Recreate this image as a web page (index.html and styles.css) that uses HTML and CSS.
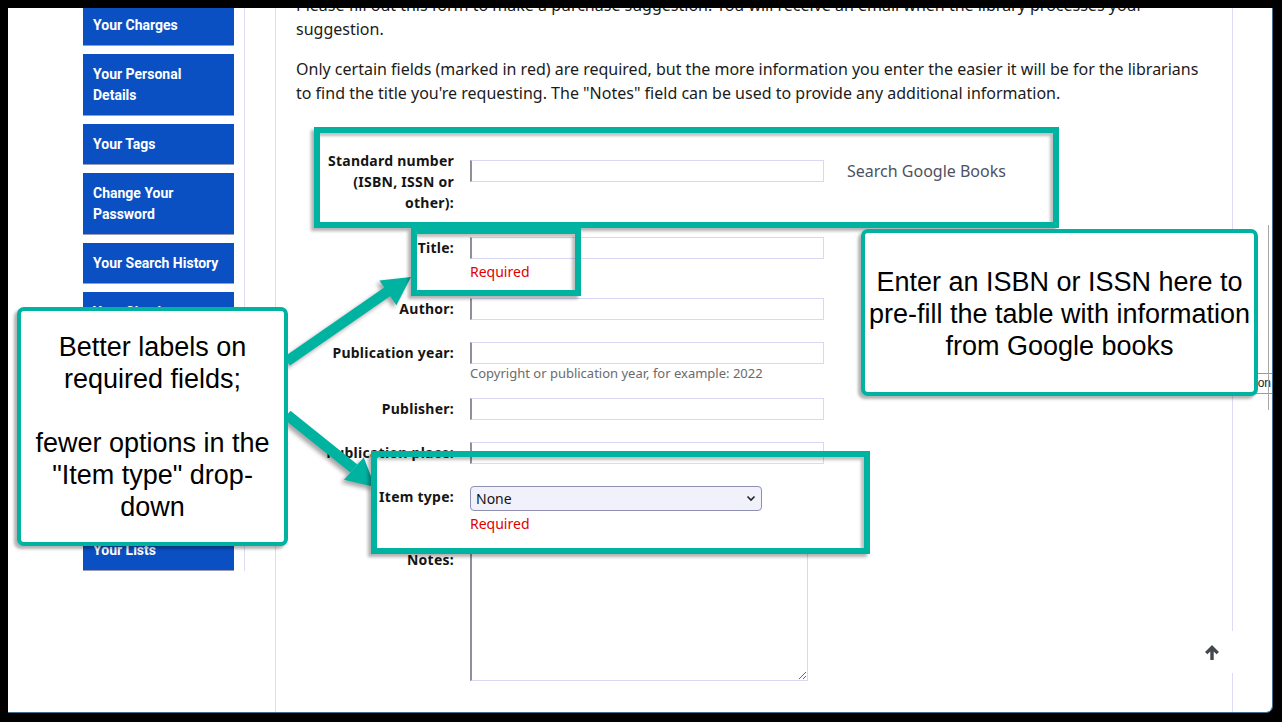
FILE: index.html
```html
<!DOCTYPE html>
<html lang="en">
<head>
<meta charset="utf-8">
<title>Purchase suggestion</title>
<link rel="stylesheet" href="styles.css">
</head>
<body>
<div class="window">
  <div class="layout">
    <nav class="sidebar">
      <ul class="usermenu">
        <li><a class="menu-link">Your Charges</a></li>
        <li><a class="menu-link">Your Personal Details</a></li>
        <li><a class="menu-link">Your Tags</a></li>
        <li><a class="menu-link">Change Your Password</a></li>
        <li><a class="menu-link">Your Search History</a></li>
        <li><a class="menu-link">Your Checkout History</a></li>
        <li><a class="menu-link">Your Purchase Suggestions</a></li>
        <li><a class="menu-link">Your Messaging</a></li>
        <li><a class="menu-link">Your Clubs</a></li>
        <li><a class="menu-link">Your Lists</a></li>
      </ul>
    </nav>
    <main class="maincontent">
      <p class="intro">Please fill out this form to make a purchase suggestion. You will receive an email when the library processes your suggestion.</p>
      <p class="intro">Only certain fields (marked in red) are required, but the more information you enter the easier it will be for the librarians to find the title you're requesting. The "Notes" field can be used to provide any additional information.</p>
      <form class="suggest">
        <ol class="rows">
          <li class="row row-std">
            <label class="lbl">Standard number (ISBN, ISSN or other):</label>
            <div class="field field-std">
              <input class="txt" type="text">
              <span class="gbooks">Search Google Books</span>
            </div>
          </li>
          <li class="row noted">
            <label class="lbl">Title:</label>
            <div class="field">
              <input class="txt" type="text">
              <div class="required">Required</div>
            </div>
          </li>
          <li class="row">
            <label class="lbl">Author:</label>
            <div class="field"><input class="txt" type="text"></div>
          </li>
          <li class="row noted">
            <label class="lbl">Publication year:</label>
            <div class="field">
              <input class="txt" type="text">
              <div class="hint">Copyright or publication year, for example: 2022</div>
            </div>
          </li>
          <li class="row">
            <label class="lbl">Publisher:</label>
            <div class="field"><input class="txt" type="text"></div>
          </li>
          <li class="row">
            <label class="lbl">Publication place:</label>
            <div class="field"><input class="txt" type="text"></div>
          </li>
          <li class="row noted row-type">
            <label class="lbl">Item type:</label>
            <div class="field">
              <div class="selectwrap">
                <select class="sel"><option>None</option></select>
                <svg class="chev" width="10" height="7" viewBox="0 0 10 7"><path d="M1.5 1.5 L5 5 L8.5 1.5" fill="none" stroke="#222" stroke-width="1.6"/></svg>
              </div>
              <div class="required">Required</div>
            </div>
          </li>
          <li class="row row-notes">
            <label class="lbl">Notes:</label>
            <div class="field"><textarea class="area"></textarea></div>
          </li>
        </ol>
      </form>
    </main>
  </div>

  <div class="edge-tab">Suggestion</div>
  <div class="edge-line"></div>

  <a class="totop" href="#">
    <svg width="16" height="17" viewBox="0 0 16 17"><path d="M8 1 L15 8 L12.6 10.3 L9.7 7.4 V16 H6.3 V7.4 L3.4 10.3 L1 8 Z" fill="#45474f"/></svg>
  </a>

  <svg class="arrows" width="1282" height="722" viewBox="0 0 1282 722">
    <g fill="#00b3a1">
      <polygon points="284,357 290,365.6 391,295.5 385,286.9"/>
      <polygon points="411,277 396.4,305.2 379.4,280.4"/>
      <polygon points="283.5,418.8 290.5,410.8 357.4,464.6 350.4,472.6"/>
      <polygon points="375,487 344,479.8 363.8,457.2"/>
    </g>
  </svg>

  <div class="mark mark-std"></div>
  <div class="mark mark-title"></div>
  <div class="mark mark-type"></div>

  <div class="callout callout-isbn">Enter an ISBN or ISSN here to pre-fill the table with information from Google books</div>
  <div class="callout callout-labels">Better labels on required fields;<br><br>fewer options in the "Item type" drop-down</div>
</div>
</body>
</html>
```

FILE: styles.css
```css
* { box-sizing: border-box; }

html, body { margin: 0; padding: 0; }

body {
  background: #000;
  padding: 8px 9px 9px 8px;
  font-family: "Noto Sans", "Open Sans", sans-serif;
  color: #1b1b1b;
}

.window {
  position: relative;
  width: 1265px;
  height: 705px;
  background: #fff;
  overflow: hidden;
  border-right: 1px solid #3f6f8c;
  border-bottom: 1px solid #3f6f8c;
  border-bottom-right-radius: 7px;
}

.layout {
  display: flex;
  align-items: stretch;
  min-height: 100%;
  padding-left: 75px;
}

/* ---------- sidebar ---------- */
.sidebar {
  align-self: flex-start;
  width: 162px;
  padding-right: 10px;
  border-right: 1px solid #dcdcf6;
}

.usermenu {
  list-style: none;
  margin: -3px 0 0;
  padding: 0;
  display: flex;
  flex-direction: column;
  gap: 8px;
}

.menu-link {
  display: block;
  background: #0b50c3;
  color: #fff;
  font-family: Roboto, "Liberation Sans", sans-serif;
  font-weight: 700;
  font-size: 14px;
  line-height: 21px;
  padding: 10px 10px 9px;
  border-bottom: 1px solid #9c9cb6;
}

/* ---------- main ---------- */
.maincontent {
  margin-left: 30px;
  width: 958px;
  border-left: 1px solid #dcdcf6;
  border-right: 1px solid #dcdcf6;
  padding: 0 20px;
}

.intro {
  margin: 0 0 16px;
  font-size: 16px;
  line-height: 24px;
  color: #1b1b1b;
}

.intro:first-child { margin-top: -15px; }

.suggest { padding-top: 29px; }

.rows {
  list-style: none;
  margin: 0 0 0 18px;
  padding: 0;
}

.row {
  display: grid;
  grid-template-columns: 140px 1fr;
  column-gap: 16px;
  align-items: start;
  margin-bottom: 22px;
}

.row.noted { margin-bottom: 16px; }
.row.row-type { margin-bottom: 15px; }
.row-std { margin-bottom: 24px; }

.lbl {
  font-weight: 700;
  font-size: 14px;
  line-height: 21px;
  letter-spacing: 0.25px;
  text-align: right;
  color: #151515;
}

.field { display: flex; flex-direction: column; align-items: flex-start; }

.field-std {
  flex-direction: row;
  align-items: center;
  padding-top: 10px;
}

.txt {
  width: 354px;
  height: 22px;
  margin: 0;
  border: 1px solid #d8d8f4;
  border-left: 2px solid #8e8e9c;
  background: #fff;
  font: 14px "Noto Sans", sans-serif;
}

.gbooks {
  margin-left: 23px;
  font-size: 16px;
  color: #4d5262;
}

.required {
  margin-top: 3px;
  font-size: 14px;
  line-height: 20px;
  color: #df0000;
}

.hint {
  font-size: 13px;
  line-height: 18px;
  color: #6b6b6b;
}

.selectwrap {
  display: grid;
  align-items: center;
}

.sel, .chev { grid-area: 1 / 1; }

.sel {
  appearance: none;
  -webkit-appearance: none;
  width: 292px;
  height: 25px;
  margin: 0;
  padding: 0 0 0 5px;
  border: 1px solid #8f8fb2;
  border-radius: 4px;
  background: #f1f1fc;
  font: 14px "Noto Sans", sans-serif;
  color: #111;
}

.chev { justify-self: end; margin-right: 6px; }

.area {
  display: block;
  width: 338px;
  height: 132px;
  margin: 0;
  border: 1px solid #d8d8f4;
  border-left: 2px solid #8e8e9c;
  background: #fff;
}

/* ---------- overlays ---------- */
.totop {
  position: absolute;
  left: 1182px;
  top: 623px;
  width: 44px;
  height: 42px;
  background: #fff;
  display: flex;
  align-items: center;
  justify-content: center;
}

.edge-tab {
  position: absolute;
  left: 1190px;
  top: 365px;
  width: 76px;
  height: 21px;
  border: 1px solid #9a9a9a;
  background: #fff;
  font: 12px "Liberation Sans", sans-serif;
  line-height: 19px;
  text-align: right;
  padding-right: 2px;
  color: #222;
}

.edge-line {
  position: absolute;
  left: 1260px;
  top: 217px;
  width: 1px;
  height: 185px;
  background: #a6a6a6;
}

.arrows {
  position: absolute;
  left: -8px;
  top: -8px;
  filter: drop-shadow(-3px 3px 2px rgba(0,0,0,0.35));
}

.mark {
  position: absolute;
  border: 6px solid #00b3a1;
  box-shadow: -3px 3px 3px rgba(0,0,0,0.3), inset -3px 3px 3px rgba(0,0,0,0.25);
}

.mark-std { left: 306px; top: 119px; width: 745px; height: 101px; }
.mark-title { left: 403px; top: 220px; width: 170px; height: 68px; }
.mark-type { left: 363px; top: 443px; width: 499px; height: 103px; }

.callout {
  position: absolute;
  display: flex;
  align-items: center;
  justify-content: center;
  text-align: center;
  background: #fff;
  border: 4px solid #00b3a1;
  border-radius: 7px;
  box-shadow: -3px 3px 3px rgba(0,0,0,0.3);
  font-family: "Liberation Sans", Arial, sans-serif;
  font-size: 27px;
  line-height: 32px;
  color: #000;
}

.callout-isbn { left: 853px; top: 221px; width: 397px; height: 167px; padding: 3px 2px 0; }
.callout-labels { left: 9px; top: 299px; width: 271px; height: 239px; padding: 0 4px; }
```
